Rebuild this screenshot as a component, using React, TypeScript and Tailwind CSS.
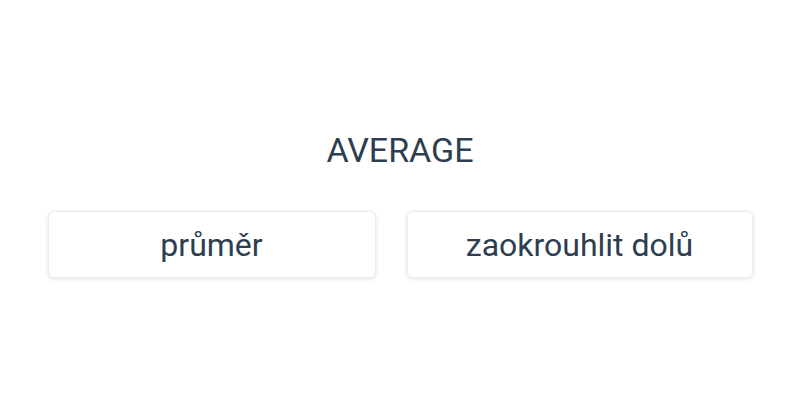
export default function App() {
  return (
    <div className="w-[800px] h-[400px] bg-white flex flex-col items-center pt-[128px] font-['Roboto',sans-serif] text-[#2c3e50]">
      <h1 className="text-[34px] leading-[44px] font-normal">AVERAGE</h1>
      <div className="mt-[39px] flex gap-[31px]">
        <button className="w-[328px] h-[67px] rounded-[6px] border border-[#ececec] bg-white shadow-[0_1px_4px_rgba(0,0,0,0.12)] text-[32px]">
          průměr
        </button>
        <button className="w-[346px] h-[67px] rounded-[6px] border border-[#ececec] bg-white shadow-[0_1px_4px_rgba(0,0,0,0.12)] text-[32px]">
          zaokrouhlit dolů
        </button>
      </div>
    </div>
  );
}
